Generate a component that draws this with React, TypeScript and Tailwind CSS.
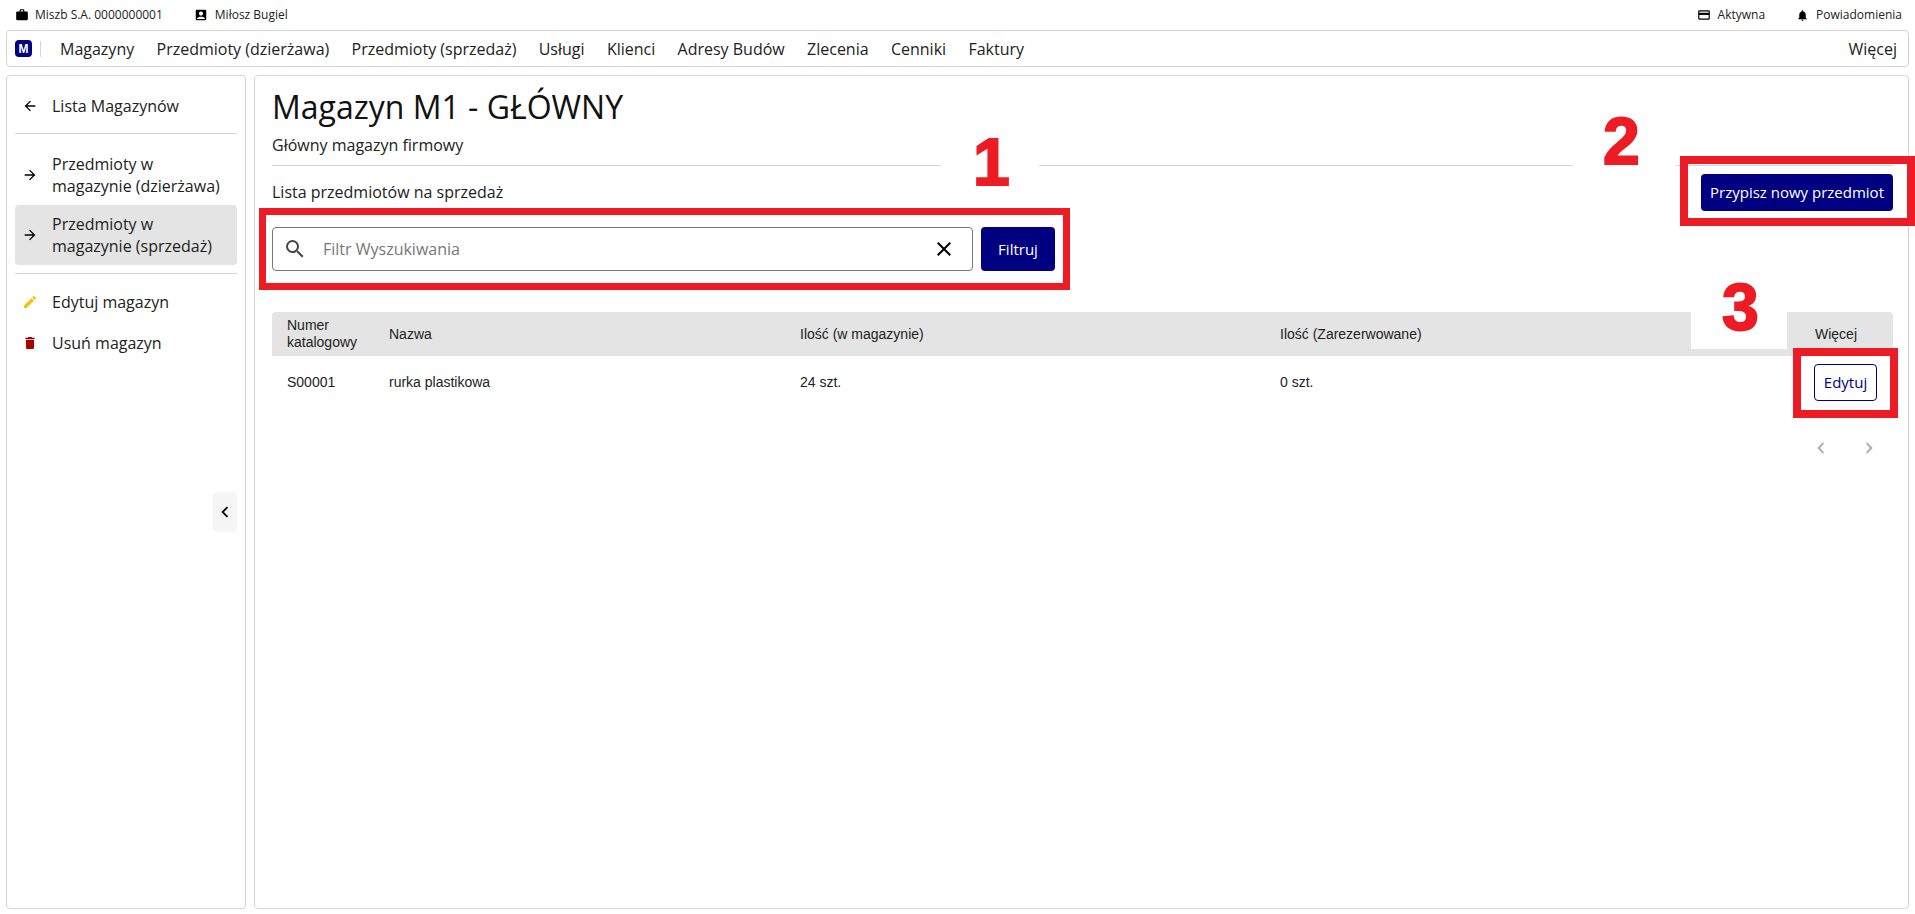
import React from "react";
import {
  MdAccountBox,
  MdArrowBack,
  MdArrowForward,
  MdChevronLeft,
  MdChevronRight,
  MdClose,
  MdCreditCard,
  MdDelete,
  MdEdit,
  MdNotifications,
  MdSearch,
  MdWork,
} from "react-icons/md";

const open = "font-['Open_Sans','Noto_Sans',sans-serif]";
const arial = "font-['Liberation_Sans',Arial,sans-serif]";

function Top({ icon, text, gap }: { icon: React.ReactNode; text: string; gap: string }) {
  return (
    <div className={`flex items-center text-[12px] text-[#222] ${gap}`}>
      {icon}
      <span>{text}</span>
    </div>
  );
}

function SideItem({ icon, text, active, className }: { icon: React.ReactNode; text: React.ReactNode; active?: boolean; className?: string }) {
  return (
    <div className={`flex items-center rounded-[4px] pl-[7px] text-[16px] leading-[22px] text-[#222] ${active ? "bg-[#e4e4e4]" : ""} ${className ?? ""}`}>
      <span className="flex w-[30px] shrink-0">{icon}</span>
      <span>{text}</span>
    </div>
  );
}

function Num({ children, className }: { children: string; className: string }) {
  return (
    <div className={`absolute ${arial} text-[66px] leading-none font-bold text-[#ed1c24] [-webkit-text-stroke:2px_#ed1c24] ${className}`}>
      {children}
    </div>
  );
}

export default function App() {
  const nav = ["Magazyny", "Przedmioty (dzierżawa)", "Przedmioty (sprzedaż)", "Usługi", "Klienci", "Adresy Budów", "Zlecenia", "Cenniki", "Faktury"];
  const forward = <MdArrowForward size={16} className="text-black" />;
  return (
    <div className={`relative h-[914px] w-[1915px] overflow-hidden bg-white ${open}`}>
      <div className="flex h-[30px] items-center justify-between pr-[13px] pl-[15px]">
        <div className="flex items-center gap-[31px]">
          <Top gap="gap-[6px]" icon={<MdWork size={14} className="text-black" />} text="Miszb S.A. 0000000001" />
          <Top gap="gap-[7px]" icon={<MdAccountBox size={14} className="text-black" />} text="Miłosz Bugiel" />
        </div>
        <div className="flex items-center gap-[31px]">
          <Top gap="gap-[7px]" icon={<MdCreditCard size={14} className="text-black" />} text="Aktywna" />
          <Top gap="gap-[7px]" icon={<MdNotifications size={13} className="text-black" />} text="Powiadomienia" />
        </div>
      </div>

      <div className="mx-[6px] flex h-[37px] items-center justify-between rounded-[4px] border border-[#d5d5d5] pr-[11px] pl-[8px] text-[16px] text-[#222]">
        <div className="flex items-center">
          <div className={`flex h-[17px] w-[17px] items-center justify-center rounded-[4px] bg-[#000080] text-[12px] font-bold text-white ${arial}`}>M</div>
          <div className="ml-[8px] h-[16px] w-px bg-[#d5d5d5]" />
          <div className="ml-[19px] flex items-center gap-[22.3px]">
            {nav.map((n) => (
              <span key={n}>{n}</span>
            ))}
          </div>
        </div>
        <span>Więcej</span>
      </div>

      <div className="mx-[6px] mt-[8px] flex h-[834px] gap-[8px]">
        <aside className="relative w-[240px] shrink-0 rounded-[4px] border border-[#d5d5d5] px-[8px] pt-[9px]">
          <SideItem className="h-[41px]" icon={<MdArrowBack size={16} className="text-black" />} text="Lista Magazynów" />
          <div className="mt-[7px] h-px bg-[#d5d5d5]" />
          <SideItem className="mt-[10px] h-[61px]" icon={forward} text={<>Przedmioty w<br />magazynie (dzierżawa)</>} />
          <SideItem active className="h-[60px]" icon={forward} text={<>Przedmioty w<br />magazynie (sprzedaż)</>} />
          <div className="mt-[8px] h-px bg-[#d5d5d5]" />
          <SideItem className="mt-[17px] h-[21px]" icon={<MdEdit size={16} className="text-[#eac612]" />} text="Edytuj magazyn" />
          <SideItem className="mt-[20px] h-[21px]" icon={<MdDelete size={16} className="text-[#a80000]" />} text="Usuń magazyn" />
          <button className="absolute top-[416px] left-[206px] flex h-[40px] w-[24px] items-center justify-center rounded-[4px] bg-[#f5f5f5]">
            <MdChevronLeft size={22} className="text-black" />
          </button>
        </aside>

        <main className="flex-1 rounded-[4px] border border-[#d5d5d5] pt-[9px] pr-[15px] pl-[17px]">
          <h1 className="h-[44px] text-[32px] leading-[44px] text-[#111]">Magazyn M1 - GŁÓWNY</h1>
          <p className="mt-[6px] text-[16px] leading-[20px] text-[#222]">Główny magazyn firmowy</p>
          <div className="mt-[10px] h-px bg-[#d5d5d5]" />
          <div className="mt-[8px] flex h-[37px] items-center justify-between">
            <span className="-translate-y-px text-[16px] text-[#222]">Lista przedmiotów na sprzedaż</span>
            <button className="h-[37px] w-[192px] rounded-[4px] bg-[#000080] text-[15px] text-white">Przypisz nowy przedmiot</button>
          </div>
          <div className="mt-[16px] flex gap-[8px]">
            <div className="flex h-[44px] w-[701px] items-center rounded-[4px] border border-[#777] pr-[16px] pl-[10px]">
              <MdSearch size={24} className="text-[#444]" />
              <span className="ml-[16px] flex-1 text-[16px] text-[#777]">Filtr Wyszukiwania</span>
              <MdClose size={24} className="text-black" />
            </div>
            <button className="h-[44px] w-[74px] rounded-[4px] bg-[#000080] text-[15px] text-white">Filtruj</button>
          </div>

          <div className={`mt-[41px] ${arial} text-[14px] text-[#222]`}>
            <div className="grid h-[44px] grid-cols-[102px_411px_480px_1fr] items-center rounded-t-[4px] bg-[#e4e4e4] leading-[17px]">
              <span className="pl-[15px]">Numer katalogowy</span>
              <span className="pl-[15px]">Nazwa</span>
              <span className="pl-[15px]">Ilość (w magazynie)</span>
              <div className="flex items-center justify-between pr-[36px] pl-[15px]">
                <span>Ilość (Zarezerwowane)</span>
                <span>Więcej</span>
              </div>
            </div>
            <div className="grid h-[53px] grid-cols-[102px_411px_480px_1fr] items-center">
              <span className="pl-[15px]">S00001</span>
              <span className="pl-[15px]">rurka plastikowa</span>
              <span className="pl-[15px]">24 szt.</span>
              <div className="flex items-center justify-between pr-[16px] pl-[15px]">
                <span>0 szt.</span>
                <button className={`h-[37px] w-[63px] rounded-[4px] border border-[#000080] text-[15px] text-[#000080] ${open}`}>Edytuj</button>
              </div>
            </div>
            <div className="mt-[28px] flex justify-end gap-[26px] pr-[13px] text-[#aaa]">
              <MdChevronLeft size={22} />
              <MdChevronRight size={22} />
            </div>
          </div>
        </main>
      </div>

      <div className="absolute top-[120px] left-[941px] h-[70px] w-[98px] bg-white" />
      <div className="absolute top-[110px] left-[1573px] h-[60px] w-[103px] bg-white" />
      <div className="absolute top-[276px] left-[1691px] h-[73px] w-[96px] bg-white" />
      <Num className="top-[129px] left-[973px]">1</Num>
      <Num className="top-[108px] left-[1603px]">2</Num>
      <Num className="top-[274px] left-[1722px]">3</Num>
      <div className="absolute top-[208px] left-[259px] h-[82px] w-[811px] border-[7px] border-[#ed1c24]" />
      <div className="absolute top-[156px] left-[1680px] h-[70px] w-[235px] border-[8px] border-[#ed1c24]" />
      <div className="absolute top-[348px] left-[1793px] h-[70px] w-[105px] border-[8px] border-[#ed1c24]" />
    </div>
  );
}
